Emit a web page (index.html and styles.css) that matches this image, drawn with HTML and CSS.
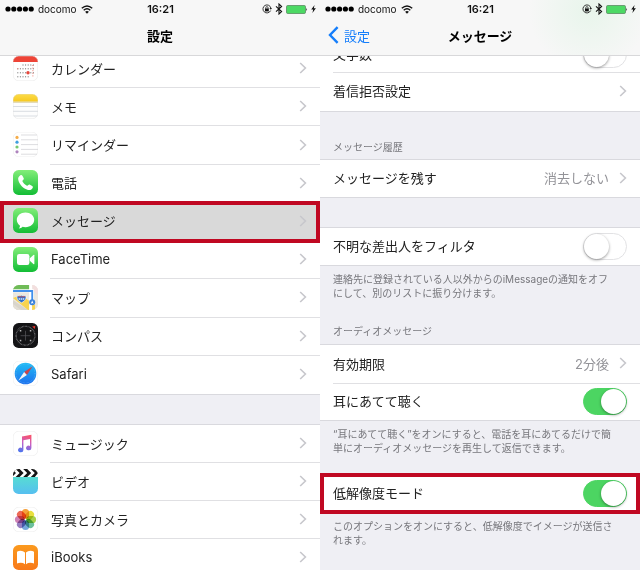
FILE: index.html
```html
<!DOCTYPE html>
<html lang="ja">
<head>
    <meta charset="UTF-8">
    <meta name="viewport" content="width=device-width, initial-scale=1.0">
    <title>設定 - メッセージ</title>
    <link rel="stylesheet" href="styles.css">
</head>
<body>
    <!-- shared icons -->
    <svg class="defs" width="0" height="0" aria-hidden="true">
        <symbol id="dots" viewBox="0 0 29 6">
            <circle cx="3" cy="3" r="2.6"/><circle cx="8.8" cy="3" r="2.6"/><circle cx="14.6" cy="3" r="2.6"/><circle cx="20.4" cy="3" r="2.6"/><circle cx="26.2" cy="3" r="2.6"/>
        </symbol>
        <symbol id="wifi" viewBox="0 0 12 9">
            <g fill="none" stroke="#111" stroke-width="1.4">
                <path d="M0.8 3.3 Q6 -1.5 11.2 3.3"/>
                <path d="M2.7 5.3 Q6 2.3 9.3 5.3"/>
            </g>
            <path d="M6 8.8 L4.1 6.8 Q6 5.4 7.9 6.8 Z" fill="#111"/>
        </symbol>
        <symbol id="rotation" viewBox="0 0 10 10">
            <path d="M8.6 6.6 A4 4 0 1 1 8.9 4.2" fill="none" stroke="#222" stroke-width="0.9"/>
            <path d="M7.4 4 H10 L8.8 5.8 Z" fill="#222"/>
            <path d="M3.8 4.8 V3.7 a1.1 1.1 0 0 1 2.2 0 V4.8" fill="none" stroke="#111" stroke-width="0.7"/>
            <rect x="3" y="4.5" width="3.8" height="2.9" fill="#111"/>
        </symbol>
        <symbol id="bluetooth" viewBox="0 0 8 12">
            <path d="M1 3.4 L6.6 8.6 L4 11 V1 L6.6 3.4 L1 8.6" fill="none" stroke="#111" stroke-width="1.1"/>
        </symbol>
        <symbol id="battery" viewBox="0 0 22 9">
            <rect x="0.5" y="0.5" width="19" height="8" rx="1.2" fill="#4cd964" stroke="#5a8a62" stroke-width="0.8"/>
            <path d="M20.4 3 Q21.8 4.5 20.4 6 Z" fill="#111"/>
        </symbol>
        <symbol id="bolt" viewBox="0 0 5 8">
            <path d="M3.6 0 L0.2 4.5 H2.2 L1.4 8 L4.9 3.2 H2.8 Z" fill="#111"/>
        </symbol>
        <symbol id="chevron" viewBox="0 0 8 12">
            <path d="M1.2 1 L6.4 6 L1.2 11" fill="none" stroke="currentColor" stroke-width="1.6"/>
        </symbol>
        <linearGradient id="green" x2="0" y2="1"><stop offset="0" stop-color="#83ee79"/><stop offset="1" stop-color="#12bd35"/></linearGradient>
        <linearGradient id="blue" x2="0" y2="1"><stop offset="0" stop-color="#1fbdf5"/><stop offset="1" stop-color="#1d70ee"/></linearGradient>
        <linearGradient id="yellow" x2="0" y2="1"><stop offset="0" stop-color="#fcdc4b"/><stop offset="1" stop-color="#f7c91f"/></linearGradient>
        <linearGradient id="orange" x2="0" y2="1"><stop offset="0" stop-color="#fb9a1e"/><stop offset="1" stop-color="#f8791a"/></linearGradient>
        <linearGradient id="aqua" x2="0" y2="1"><stop offset="0" stop-color="#57dcd3"/><stop offset="1" stop-color="#56bff0"/></linearGradient>
        <linearGradient id="note" gradientUnits="userSpaceOnUse" x1="14" y1="4" x2="9" y2="21"><stop offset="0" stop-color="#f8546b"/><stop offset="0.45" stop-color="#c95fc4"/><stop offset="1" stop-color="#4e75ee"/></linearGradient>
        <clipPath id="tile"><rect width="25" height="25" rx="5.6"/></clipPath>
    </svg>

    <main class="screens">
        <section class="screen">
            <header class="bar">
                <div class="status">
                    <div class="carrier">
                        <svg class="dots"><use href="#dots"/></svg>
                        <span>docomo</span>
                        <svg class="wifi"><use href="#wifi"/></svg>
                    </div>
                    <span class="time">16:21</span>
                    <div class="indicators">
                        <svg class="rotation"><use href="#rotation"/></svg>
                        <svg class="bluetooth"><use href="#bluetooth"/></svg>
                        <svg class="battery"><use href="#battery"/></svg>
                        <svg class="bolt"><use href="#bolt"/></svg>
                    </div>
                </div>
                <div class="nav">
                    <h1>設定</h1>
                </div>
            </header>

            <nav class="content apps">
                <ul class="group nine">
                    <li><a class="row" href="#">
                        <svg class="icon" viewBox="0 0 25 25">
                            <g clip-path="url(#tile)">
                                <rect width="25" height="25" fill="#fff"/>
                                <rect width="25" height="6" fill="#ee4437"/>
                            </g>
                            <rect x="0.2" y="0.2" width="24.6" height="24.6" rx="5.6" fill="none" stroke="#ddd" stroke-width="0.4"/>
                            <g fill="none" stroke="#666" stroke-width="1" stroke-dasharray="1 1.6">
                                <path d="M9.5 9 H22"/>
                                <path d="M4.3 12.8 H22"/>
                                <path d="M4.3 16.8 H22"/>
                                <path d="M4.3 20.8 H16"/>
                            </g>
                            <g fill="none" stroke="#f07a70" stroke-width="1" stroke-dasharray="1 1.6">
                                <path d="M4.3 12.8 H6"/>
                                <path d="M19.9 9 V22"/>
                            </g>
                            <circle cx="15" cy="16.8" r="1.7" fill="#e6483d"/>
                        </svg>
                        <span class="label">カレンダー</span>
                        <svg class="chevron"><use href="#chevron"/></svg>
                    </a></li>
                    <li><a class="row" href="#">
                        <svg class="icon" viewBox="0 0 25 25">
                            <g clip-path="url(#tile)">
                                <rect width="25" height="25" fill="#fdfdfd"/>
                                <rect width="25" height="7.6" fill="url(#yellow)"/>
                                <path d="M0 8.2 H25" stroke="#c9b56a" stroke-width="0.7"/>
                                <path d="M0 12.5 H25 M0 17.3 H25 M0 22 H25" stroke="#cfd4da" stroke-width="0.8"/>
                            </g>
                            <rect x="0.2" y="0.2" width="24.6" height="24.6" rx="5.6" fill="none" stroke="#ddd" stroke-width="0.4"/>
                        </svg>
                        <span class="label">メモ</span>
                        <svg class="chevron"><use href="#chevron"/></svg>
                    </a></li>
                    <li><a class="row" href="#">
                        <svg class="icon" viewBox="0 0 25 25">
                            <rect x="0.2" y="0.2" width="24.6" height="24.6" rx="5.6" fill="#fff" stroke="#e2e2e2" stroke-width="0.4"/>
                            <path d="M8 3 H24 M8 7.8 H25 M8 12.6 H25 M8 17.4 H25 M8 22.2 H24" stroke="#cfcfd2" stroke-width="0.7"/>
                            <circle cx="4" cy="5.4" r="1.6" fill="#f5ad4b"/>
                            <circle cx="4" cy="10.2" r="1.6" fill="#3f9fe0"/>
                            <circle cx="4" cy="15" r="1.6" fill="#76c96f"/>
                            <circle cx="4" cy="19.8" r="1.6" fill="#ae83bd"/>
                        </svg>
                        <span class="label">リマインダー</span>
                        <svg class="chevron"><use href="#chevron"/></svg>
                    </a></li>
                    <li><a class="row" href="#">
                        <svg class="icon" viewBox="0 0 25 25">
                            <rect width="25" height="25" rx="5.6" fill="url(#green)"/>
                            <path d="M7.4 5.2 C8.3 4.6 8.9 4.9 9.4 5.8 L10.6 8 C11 8.8 10.8 9.4 10.1 9.9 C9.3 10.5 9.2 10.9 9.7 11.7 C10.8 13.4 12 14.6 13.6 15.5 C14.3 15.9 14.7 15.7 15.3 15 C15.8 14.4 16.3 14.3 17 14.7 L19.2 16.1 C20.1 16.7 20.1 17.4 19.5 18.2 C18.4 19.8 16.8 20.4 15 19.9 C10.3 18.5 6.4 14.4 5.3 9.9 C4.8 7.9 5.7 6.3 7.4 5.2 Z" fill="#fff"/>
                        </svg>
                        <span class="label">電話</span>
                        <svg class="chevron"><use href="#chevron"/></svg>
                    </a></li>
                    <li><a class="row selected marked" href="#">
                        <svg class="icon" viewBox="0 0 25 25">
                            <rect width="25" height="25" rx="5.6" fill="url(#green)"/>
                            <path d="M12.5 4.4 C17.4 4.4 21.2 7.6 21.2 11.8 C21.2 16 17.4 19.2 12.5 19.2 C11.4 19.2 10.4 19.1 9.5 18.8 C8.6 19.8 7.3 20.5 5.8 20.5 C6.6 19.6 7 18.7 7 17.7 C5 16.3 3.8 14.2 3.8 11.8 C3.8 7.6 7.6 4.4 12.5 4.4 Z" fill="#fff"/>
                        </svg>
                        <span class="label">メッセージ</span>
                        <svg class="chevron"><use href="#chevron"/></svg>
                    </a></li>
                    <li><a class="row" href="#">
                        <svg class="icon" viewBox="0 0 25 25">
                            <rect width="25" height="25" rx="5.6" fill="url(#green)"/>
                            <rect x="4" y="7" width="12.4" height="11" rx="2.2" fill="#fff"/>
                            <path d="M16.8 11.2 L20.4 8 Q21.4 7.3 21.4 8.4 V16.6 Q21.4 17.7 20.4 17 L16.8 13.8 Z" fill="#fff"/>
                        </svg>
                        <span class="label">FaceTime</span>
                        <svg class="chevron"><use href="#chevron"/></svg>
                    </a></li>
                    <li><a class="row" href="#">
                        <svg class="icon" viewBox="0 0 25 25">
                            <g clip-path="url(#tile)">
                                <rect width="25" height="25" fill="#ece8df"/>
                                <rect width="17" height="5" fill="#6fbb57"/>
                                <path d="M19 0 H25 V10 Q20 7 19 0 Z" fill="#f3dede"/>
                                <path d="M0 15 L15 25 H0 Z" fill="#d9d5cb"/>
                                <path d="M0 13 L15 25 H22 V20 L8 10 Z" fill="#f8d34e"/>
                                <path d="M0 19 L8 25 H0 Z" fill="#e3dfd6"/>
                                <path d="M17.6 0 V25" stroke="#fff" stroke-width="3"/>
                                <path d="M0 5.8 H19.2 V17" fill="none" stroke="#fff" stroke-width="3"/>
                                <path d="M0 6 H19.2 V17" fill="none" stroke="#4290ec" stroke-width="1.8"/>
                            </g>
                            <circle cx="19.2" cy="17.3" r="3" fill="#3a82dc"/>
                            <path d="M19.2 15.5 L20.6 18.7 L19.2 18 L17.8 18.7 Z" fill="#fff"/>
                            <path d="M4.3 10.5 Q6.4 11.2 8.5 10.3 Q10.6 11.2 12.7 10.5 Q14.2 15.2 8.5 17.8 Q2.8 15.2 4.3 10.5 Z" fill="#2d6fcb" stroke="#fff" stroke-width="0.6"/>
                            <path d="M5 11.6 Q8.5 12.2 12 11.6" stroke="#d45a56" stroke-width="0.9" fill="none"/>
                            <path d="M5.6 14 H11.4" stroke="#dce8f8" stroke-width="1.6" stroke-dasharray="1.5 0.6"/>
                        </svg>
                        <span class="label">マップ</span>
                        <svg class="chevron"><use href="#chevron"/></svg>
                    </a></li>
                    <li><a class="row" href="#">
                        <svg class="icon" viewBox="0 0 25 25">
                            <rect width="25" height="25" rx="5.6" fill="#141416"/>
                            <circle cx="12.5" cy="12.7" r="9.4" fill="none" stroke="#77777a" stroke-width="1.3" stroke-dasharray="0.7 0.7"/>
                            <path d="M12.5 7.8 V17.6 M7.6 12.7 H17.4" stroke="#58585c" stroke-width="0.7"/>
                            <g fill="#b8b8b8"><rect x="6.8" y="7" width="1.5" height="1.5"/><rect x="16.8" y="7" width="1.5" height="1.5"/><rect x="6.8" y="16.8" width="1.5" height="1.5"/><rect x="16.8" y="16.8" width="1.5" height="1.5"/></g>
                            <path d="M19.2 3.4 L22.3 2.9 L21.8 6 Z" fill="#e8352c"/>
                        </svg>
                        <span class="label">コンパス</span>
                        <svg class="chevron"><use href="#chevron"/></svg>
                    </a></li>
                    <li><a class="row" href="#">
                        <svg class="icon" viewBox="0 0 25 25">
                            <rect x="0.2" y="0.2" width="24.6" height="24.6" rx="5.6" fill="#fff" stroke="#e6e6e6" stroke-width="0.4"/>
                            <circle cx="12.5" cy="12.5" r="10.8" fill="url(#blue)"/>
                            <circle cx="12.5" cy="12.5" r="9.5" fill="none" stroke="#6dbff8" stroke-width="1" stroke-dasharray="0.4 1"/>
                            <path d="M19.8 5.2 L11.1 11.1 L13.9 13.9 Z" fill="#c9454a"/>
                            <path d="M5.2 19.8 L11.1 11.1 L13.9 13.9 Z" fill="#f4f4f4"/>
                        </svg>
                        <span class="label">Safari</span>
                        <svg class="chevron"><use href="#chevron"/></svg>
                    </a></li>
                </ul>

                <ul class="group four">
                    <li><a class="row" href="#">
                        <svg class="icon" viewBox="0 0 25 25">
                            <rect x="0.2" y="0.2" width="24.6" height="24.6" rx="5.6" fill="#fff" stroke="#e0e0e0" stroke-width="0.4"/>
                            <path d="M9 5.6 L18.4 3.8 V17 A2.7 2.3 0 1 1 17 15 V8 L10.4 9.3 V19 A2.7 2.3 0 1 1 9 17 Z" fill="url(#note)"/>
                        </svg>
                        <span class="label">ミュージック</span>
                        <svg class="chevron"><use href="#chevron"/></svg>
                    </a></li>
                    <li><a class="row" href="#">
                        <svg class="icon" viewBox="0 0 25 25">
                            <g clip-path="url(#tile)">
                                <rect width="25" height="25" fill="#fff"/>
                                <rect y="8" width="25" height="17" fill="url(#aqua)"/>
                                <rect width="25" height="8" fill="#151515"/>
                                <path d="M-1 0 H2.6 L6.6 4 L2.6 8 H-1 L3 4 Z M6.6 0 H10.2 L14.2 4 L10.2 8 H6.6 L10.6 4 Z M14.2 0 H17.8 L21.8 4 L17.8 8 H14.2 L18.2 4 Z M21.8 0 H26 V8 H21.8 L25 4 Z" fill="#fff"/>
                            </g>
                        </svg>
                        <span class="label">ビデオ</span>
                        <svg class="chevron"><use href="#chevron"/></svg>
                    </a></li>
                    <li><a class="row" href="#">
                        <svg class="icon petals" viewBox="0 0 25 25">
                            <rect x="0.2" y="0.2" width="24.6" height="24.6" rx="5.6" fill="#fff" stroke="#e0e0e0" stroke-width="0.4"/>
                            <rect x="8.9" y="1.9" width="7.2" height="9.8" rx="3.6" fill="#f6a13a"/>
                            <rect x="8.9" y="1.9" width="7.2" height="9.8" rx="3.6" fill="#e9df3e" transform="rotate(45 12.5 12.5)"/>
                            <rect x="8.9" y="1.9" width="7.2" height="9.8" rx="3.6" fill="#a9d04c" transform="rotate(90 12.5 12.5)"/>
                            <rect x="8.9" y="1.9" width="7.2" height="9.8" rx="3.6" fill="#6cc09c" transform="rotate(135 12.5 12.5)"/>
                            <rect x="8.9" y="1.9" width="7.2" height="9.8" rx="3.6" fill="#75a8dc" transform="rotate(180 12.5 12.5)"/>
                            <rect x="8.9" y="1.9" width="7.2" height="9.8" rx="3.6" fill="#967fc0" transform="rotate(225 12.5 12.5)"/>
                            <rect x="8.9" y="1.9" width="7.2" height="9.8" rx="3.6" fill="#ce82b6" transform="rotate(270 12.5 12.5)"/>
                            <rect x="8.9" y="1.9" width="7.2" height="9.8" rx="3.6" fill="#ee6a56" transform="rotate(315 12.5 12.5)"/>
                        </svg>
                        <span class="label">写真とカメラ</span>
                        <svg class="chevron"><use href="#chevron"/></svg>
                    </a></li>
                    <li><a class="row" href="#">
                        <svg class="icon" viewBox="0 0 25 25">
                            <rect width="25" height="25" rx="5.6" fill="url(#orange)"/>
                            <path d="M12 7.6 Q10.2 5.8 7.6 5.8 Q5.5 5.8 4 6.7 V18.6 Q5.6 17.8 7.6 17.8 Q10.2 17.8 12 19.2 Z M13 7.6 Q14.8 5.8 17.4 5.8 Q19.5 5.8 21 6.7 V18.6 Q19.4 17.8 17.4 17.8 Q14.8 17.8 13 19.2 Z" fill="#fff"/>
                        </svg>
                        <span class="label">iBooks</span>
                        <svg class="chevron"><use href="#chevron"/></svg>
                    </a></li>
                </ul>
            </nav>
        </section>

        <section class="screen">
            <header class="bar tinted">
                <div class="status">
                    <div class="carrier">
                        <svg class="dots"><use href="#dots"/></svg>
                        <span>docomo</span>
                        <svg class="wifi"><use href="#wifi"/></svg>
                    </div>
                    <span class="time">16:21</span>
                    <div class="indicators">
                        <svg class="rotation"><use href="#rotation"/></svg>
                        <svg class="bluetooth"><use href="#bluetooth"/></svg>
                        <svg class="battery"><use href="#battery"/></svg>
                        <svg class="bolt"><use href="#bolt"/></svg>
                    </div>
                </div>
                <div class="nav">
                    <a class="back" href="#">
                        <svg viewBox="0 0 11 18"><path d="M9.6 1.2 L2 9 L9.6 16.8" fill="none" stroke="currentColor" stroke-width="2.4"/></svg>
                        設定
                    </a>
                    <h1>メッセージ</h1>
                </div>
            </header>

            <div class="content options">
                <div class="group two">
                    <label class="row">
                        <span class="label">文字数</span>
                        <input class="switch" type="checkbox" role="switch">
                    </label>
                    <a class="row" href="#">
                        <span class="label">着信拒否設定</span>
                        <svg class="chevron"><use href="#chevron"/></svg>
                    </a>
                </div>

                <h2>メッセージ履歴</h2>
                <div class="group">
                    <a class="row" href="#">
                        <span class="label">メッセージを残す</span>
                        <span class="value">消去しない</span>
                        <svg class="chevron"><use href="#chevron"/></svg>
                    </a>
                </div>

                <div class="group spaced">
                    <label class="row">
                        <span class="label">不明な差出人をフィルタ</span>
                        <input class="switch" type="checkbox" role="switch">
                    </label>
                </div>
                <p class="note">連絡先に登録されている人以外からのiMessageの通知をオフ<br>にして、別のリストに振り分けます。</p>

                <h2>オーディオメッセージ</h2>
                <div class="group two">
                    <a class="row" href="#">
                        <span class="label">有効期限</span>
                        <span class="value">2分後</span>
                        <svg class="chevron"><use href="#chevron"/></svg>
                    </a>
                    <label class="row">
                        <span class="label">耳にあてて聴く</span>
                        <input class="switch" type="checkbox" role="switch" checked>
                    </label>
                </div>
                <p class="note">“耳にあてて聴く”をオンにすると、電話を耳にあてるだけで簡<br>単にオーディオメッセージを再生して返信できます。</p>

                <div class="group after-note">
                    <label class="row marked">
                        <span class="label">低解像度モード</span>
                        <input class="switch" type="checkbox" role="switch" checked>
                    </label>
                </div>
                <p class="note">このオプションをオンにすると、低解像度でイメージが送信さ<br>れます。</p>
            </div>
        </section>
    </main>
</body>
</html>
```
FILE: styles.css
```css
* {
    box-sizing: border-box;
}
body {
    margin: 0;
    font-family: Inter, "Noto Sans CJK JP", sans-serif;
    font-size: 13px;
    color: #222;
    background-color: #efeff4;
}
a {
    color: inherit;
    text-decoration: none;
}
.defs {
    position: absolute;
}
.screens {
    display: grid;
    grid-template-columns: 1fr 1fr;
    height: 100vh;
    overflow: hidden;
}
.screen {
    display: flex;
    flex-direction: column;
    min-height: 0;
}

/* status bar and title */
.bar {
    flex: none;
    height: 56px;
    background-color: #f7f7f7;
    border-bottom: 1px solid #d8d8da;
}
.tinted {
    background-image: radial-gradient(circle at 84% 20%, #e8f5eb, #f7f7f7 60px);
}
.status {
    display: grid;
    grid-template-columns: 1fr auto 1fr;
    align-items: center;
    height: 18px;
    padding: 0 4px 0 5px;
    font-size: 11px;
    color: #111;
}
.carrier,
.indicators {
    display: flex;
    align-items: center;
    gap: 4px;
}
.carrier {
    font-size: 10px;
}
.indicators {
    justify-content: flex-end;
    gap: 3px;
}
.time {
    font-weight: 600;
}
.dots {
    width: 29px;
    height: 6px;
}
.wifi {
    width: 12px;
    height: 9px;
}
.rotation {
    width: 10px;
    height: 10px;
}
.bluetooth {
    width: 8px;
    height: 12px;
}
.battery {
    width: 22px;
    height: 9px;
}
.bolt {
    width: 5px;
    height: 8px;
}
.nav {
    display: grid;
    grid-template-columns: 1fr auto 1fr;
    align-items: center;
    height: 36px;
    padding: 0 8px;
}
.nav h1 {
    grid-column: 2;
    margin: 0;
    padding-bottom: 2px;
    font-size: 13px;
    font-weight: 700;
    color: #000;
}
.back {
    display: flex;
    align-items: center;
    gap: 5px;
    padding-bottom: 2px;
    color: #157efb;
}
.back svg {
    width: 11px;
    height: 18px;
}

/* scrolled content, clipped under the bar */
.content {
    flex: 1;
    min-height: 0;
    overflow: hidden;
}
.group {
    display: flex;
    flex-direction: column;
    height: 39px;
    margin: 0;
    padding: 0;
    list-style: none;
    background-color: #fff;
    border-top: 1px solid #d9d9de;
    border-bottom: 1px solid #d9d9de;
}
.group.two {
    height: 77px;
}
.group.four {
    height: 154px;
    margin-top: 29px;
}
.group.nine {
    height: 346px;
}
.apps .group:first-child {
    margin-top: -7px;
}
.options .group:first-child {
    margin-top: -21px;
}
.group li,
.options .row {
    flex: 1;
}
.row {
    position: relative;
    display: flex;
    align-items: center;
    height: 100%;
    padding: 0 13px;
}
a.row,
label.row .label {
    padding-bottom: 2px;
}
.icon {
    flex: none;
    width: 25px;
    height: 25px;
    margin-right: 13px;
}
.petals rect + rect {
    mix-blend-mode: multiply;
}
.label {
    flex: 1;
}
.value {
    margin-right: 10px;
    color: #939398;
}
.chevron {
    flex: none;
    width: 8px;
    height: 12px;
    color: #c7c7cc;
}

/* inset separators */
.group > :not(:last-child).row::before,
.group > li:not(:last-child) .row::before {
    content: "";
    position: absolute;
    left: 13px;
    right: 0;
    bottom: 0;
    height: 1px;
    background-color: #e0e0e3;
}
.group > li:not(:last-child) .row::before {
    left: 50px;
}
.selected {
    background-color: #d9d9d9;
}
.marked::after {
    content: "";
    position: absolute;
    inset: -2px 0;
    border: 4px solid #c00822;
    z-index: 1;
}

h2,
.note {
    margin: 0;
    padding: 0 13px;
    font-size: 10px;
    font-weight: 400;
    line-height: 14px;
    color: #77777c;
}
h2 {
    padding-top: 28px;
    padding-bottom: 5px;
}
.note {
    padding-top: 6px;
    white-space: nowrap;
}
.note + h2 {
    padding-top: 24px;
    padding-bottom: 6px;
}
.group.spaced {
    margin-top: 29px;
}
.group.after-note {
    margin-top: 19px;
}

.switch {
    appearance: none;
    flex: none;
    width: 44px;
    height: 27px;
    margin: 0;
    border: 1px solid #e2e2e4;
    border-radius: 14px;
    background-color: #fff;
    cursor: pointer;
}
.switch::before {
    content: "";
    display: block;
    width: 25px;
    height: 25px;
    border-radius: 50%;
    background-color: #fff;
    box-shadow: 0 1px 3px rgba(0, 0, 0, 0.4);
}
.switch:checked {
    border-color: #4cd562;
    background-color: #4cd562;
}
.switch:checked::before {
    margin-left: 17px;
}
```
